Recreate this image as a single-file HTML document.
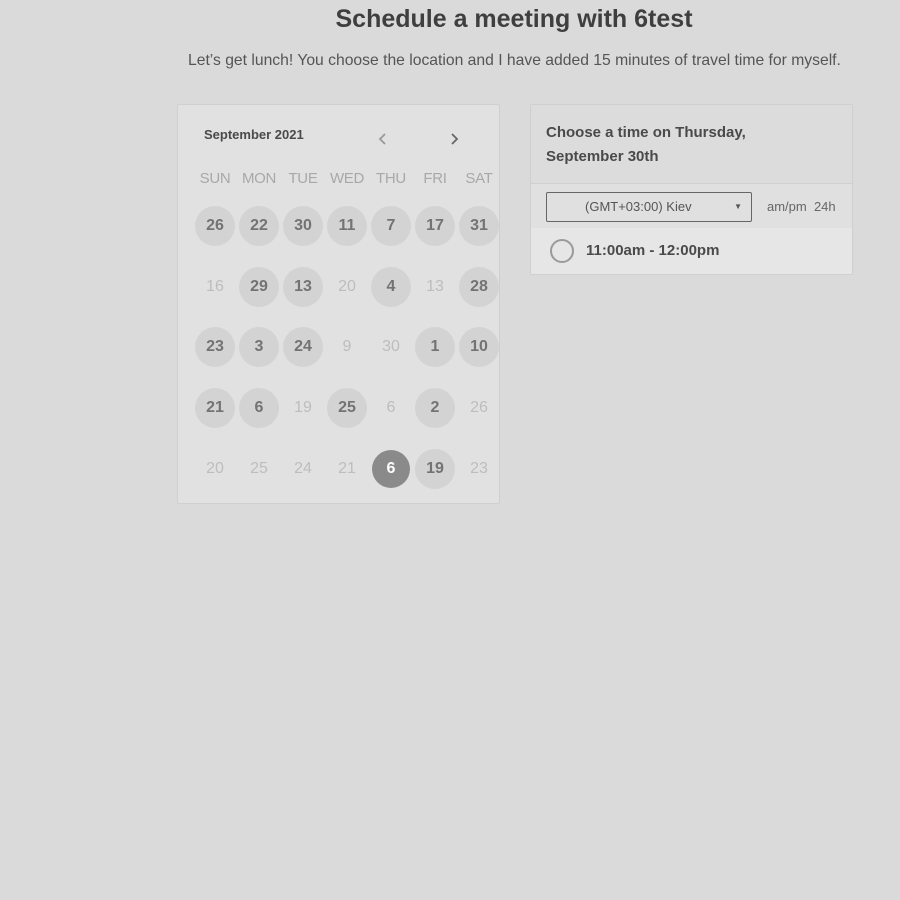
<!DOCTYPE html><html><head><style>
body{margin:0;width:900px;height:900px;background:#dadada;font-family:"Liberation Sans",sans-serif;position:relative;overflow:hidden}
.a{position:absolute}
h1{position:absolute;top:5px;left:0;width:1028px;text-align:center;margin:0;font-size:25px;color:#3f3f3f;font-weight:bold}
.sub{top:52px;left:188px;font-size:15.7px;color:#555;white-space:nowrap}
.card{left:177px;top:104px;width:321px;height:398px;background:#e1e1e1;border:1px solid #cfcfcf;border-radius:2px}
.d{position:absolute;width:40px;height:40px;margin:-20px 0 0 -20px;border-radius:50%;text-align:center;line-height:40px;font-size:16px}
.c{background:#d3d3d3;color:#737373;font-weight:bold}
.n{color:#bdbdbd}
.s{background:#8a8a8a;color:#fff;font-weight:bold;width:38px;height:38px;line-height:38px;margin:-19px 0 0 -19px}
.w{position:absolute;top:170px;font-size:15px;color:#a8a8a8;width:50px;margin-left:-25px;text-align:center}
.r{left:530px;top:104px;width:321px;height:169px;background:#e6e6e6;border:1px solid #cfcfcf;border-radius:2px;overflow:hidden}
</style></head><body>
<h1>Schedule a meeting with 6test</h1>
<div class="a sub">Let’s get lunch! You choose the location and I have added 15 minutes of travel time for myself.</div>
<div class="a card"></div>
<div class="a" style="left:204px;top:127px;font-size:13px;font-weight:bold;color:#4a4a4a">September 2021</div>
<svg class="a" style="left:377px;top:132px" width="12" height="14"><path d="M8 2L3 7l5 5" fill="none" stroke="#999" stroke-width="1.8"/></svg>
<svg class="a" style="left:449px;top:132px" width="12" height="14"><path d="M3 2l5 5-5 5" fill="none" stroke="#666" stroke-width="1.8"/></svg>
<div id="g"></div>
<div class="a r">
<div class="a" style="left:0;top:0;width:321px;height:78px;background:#dcdcdc;border-bottom:1px solid #d0d0d0"></div>
<div class="a" style="left:0;top:79px;width:321px;height:44px;background:#e0e0e0"></div>
<div class="a" style="left:15px;top:16px;font-size:15px;font-weight:bold;color:#4a4a4a;line-height:24px">Choose a time on Thursday,<br>September 30th</div>
<div class="a" style="left:15px;top:87px;width:204px;height:28px;border:1px solid #666;border-radius:2px;font-size:13px;color:#555;line-height:28px;text-indent:38px">(GMT+03:00) Kiev<span style="position:absolute;right:9px;top:0;font-size:8px">▼</span></div>
<div class="a" style="left:236px;top:94px;font-size:13px;color:#666">am/pm&nbsp; 24h</div>
<div class="a" style="left:19px;top:134px;width:20px;height:20px;border:2px solid #9a9a9a;border-radius:50%"></div>
<div class="a" style="left:55px;top:137px;font-size:15px;font-weight:bold;color:#4a4a4a">11:00am - 12:00pm</div>
</div>
<script>
var X=[215,259,303,347,391,435,479],Y=[226,287,347,408,469];
var W=["SUN","MON","TUE","WED","THU","FRI","SAT"];
var D=[["26c","22c","30c","11c","7c","17c","31c"],["16","29c","13c","20","4c","13","28c"],["23c","3c","24c","9","30","1c","10c"],["21c","6c","19","25c","6","2c","26"],["20","25","24","21","6s","19c","23"]];
var h="";W.forEach(function(w,i){h+='<div class="w" style="left:'+X[i]+'px;letter-spacing:-0.3px">'+w+'</div>'});
D.forEach(function(r,j){r.forEach(function(v,i){var t=v.slice(-1),cls=(t=="c"||t=="s")?t:"n",n=cls=="n"?v:v.slice(0,-1);h+='<div class="d '+cls+'" style="left:'+X[i]+'px;top:'+Y[j]+'px">'+n+'</div>'})});
document.getElementById("g").innerHTML=h;
</script>
</body></html>
